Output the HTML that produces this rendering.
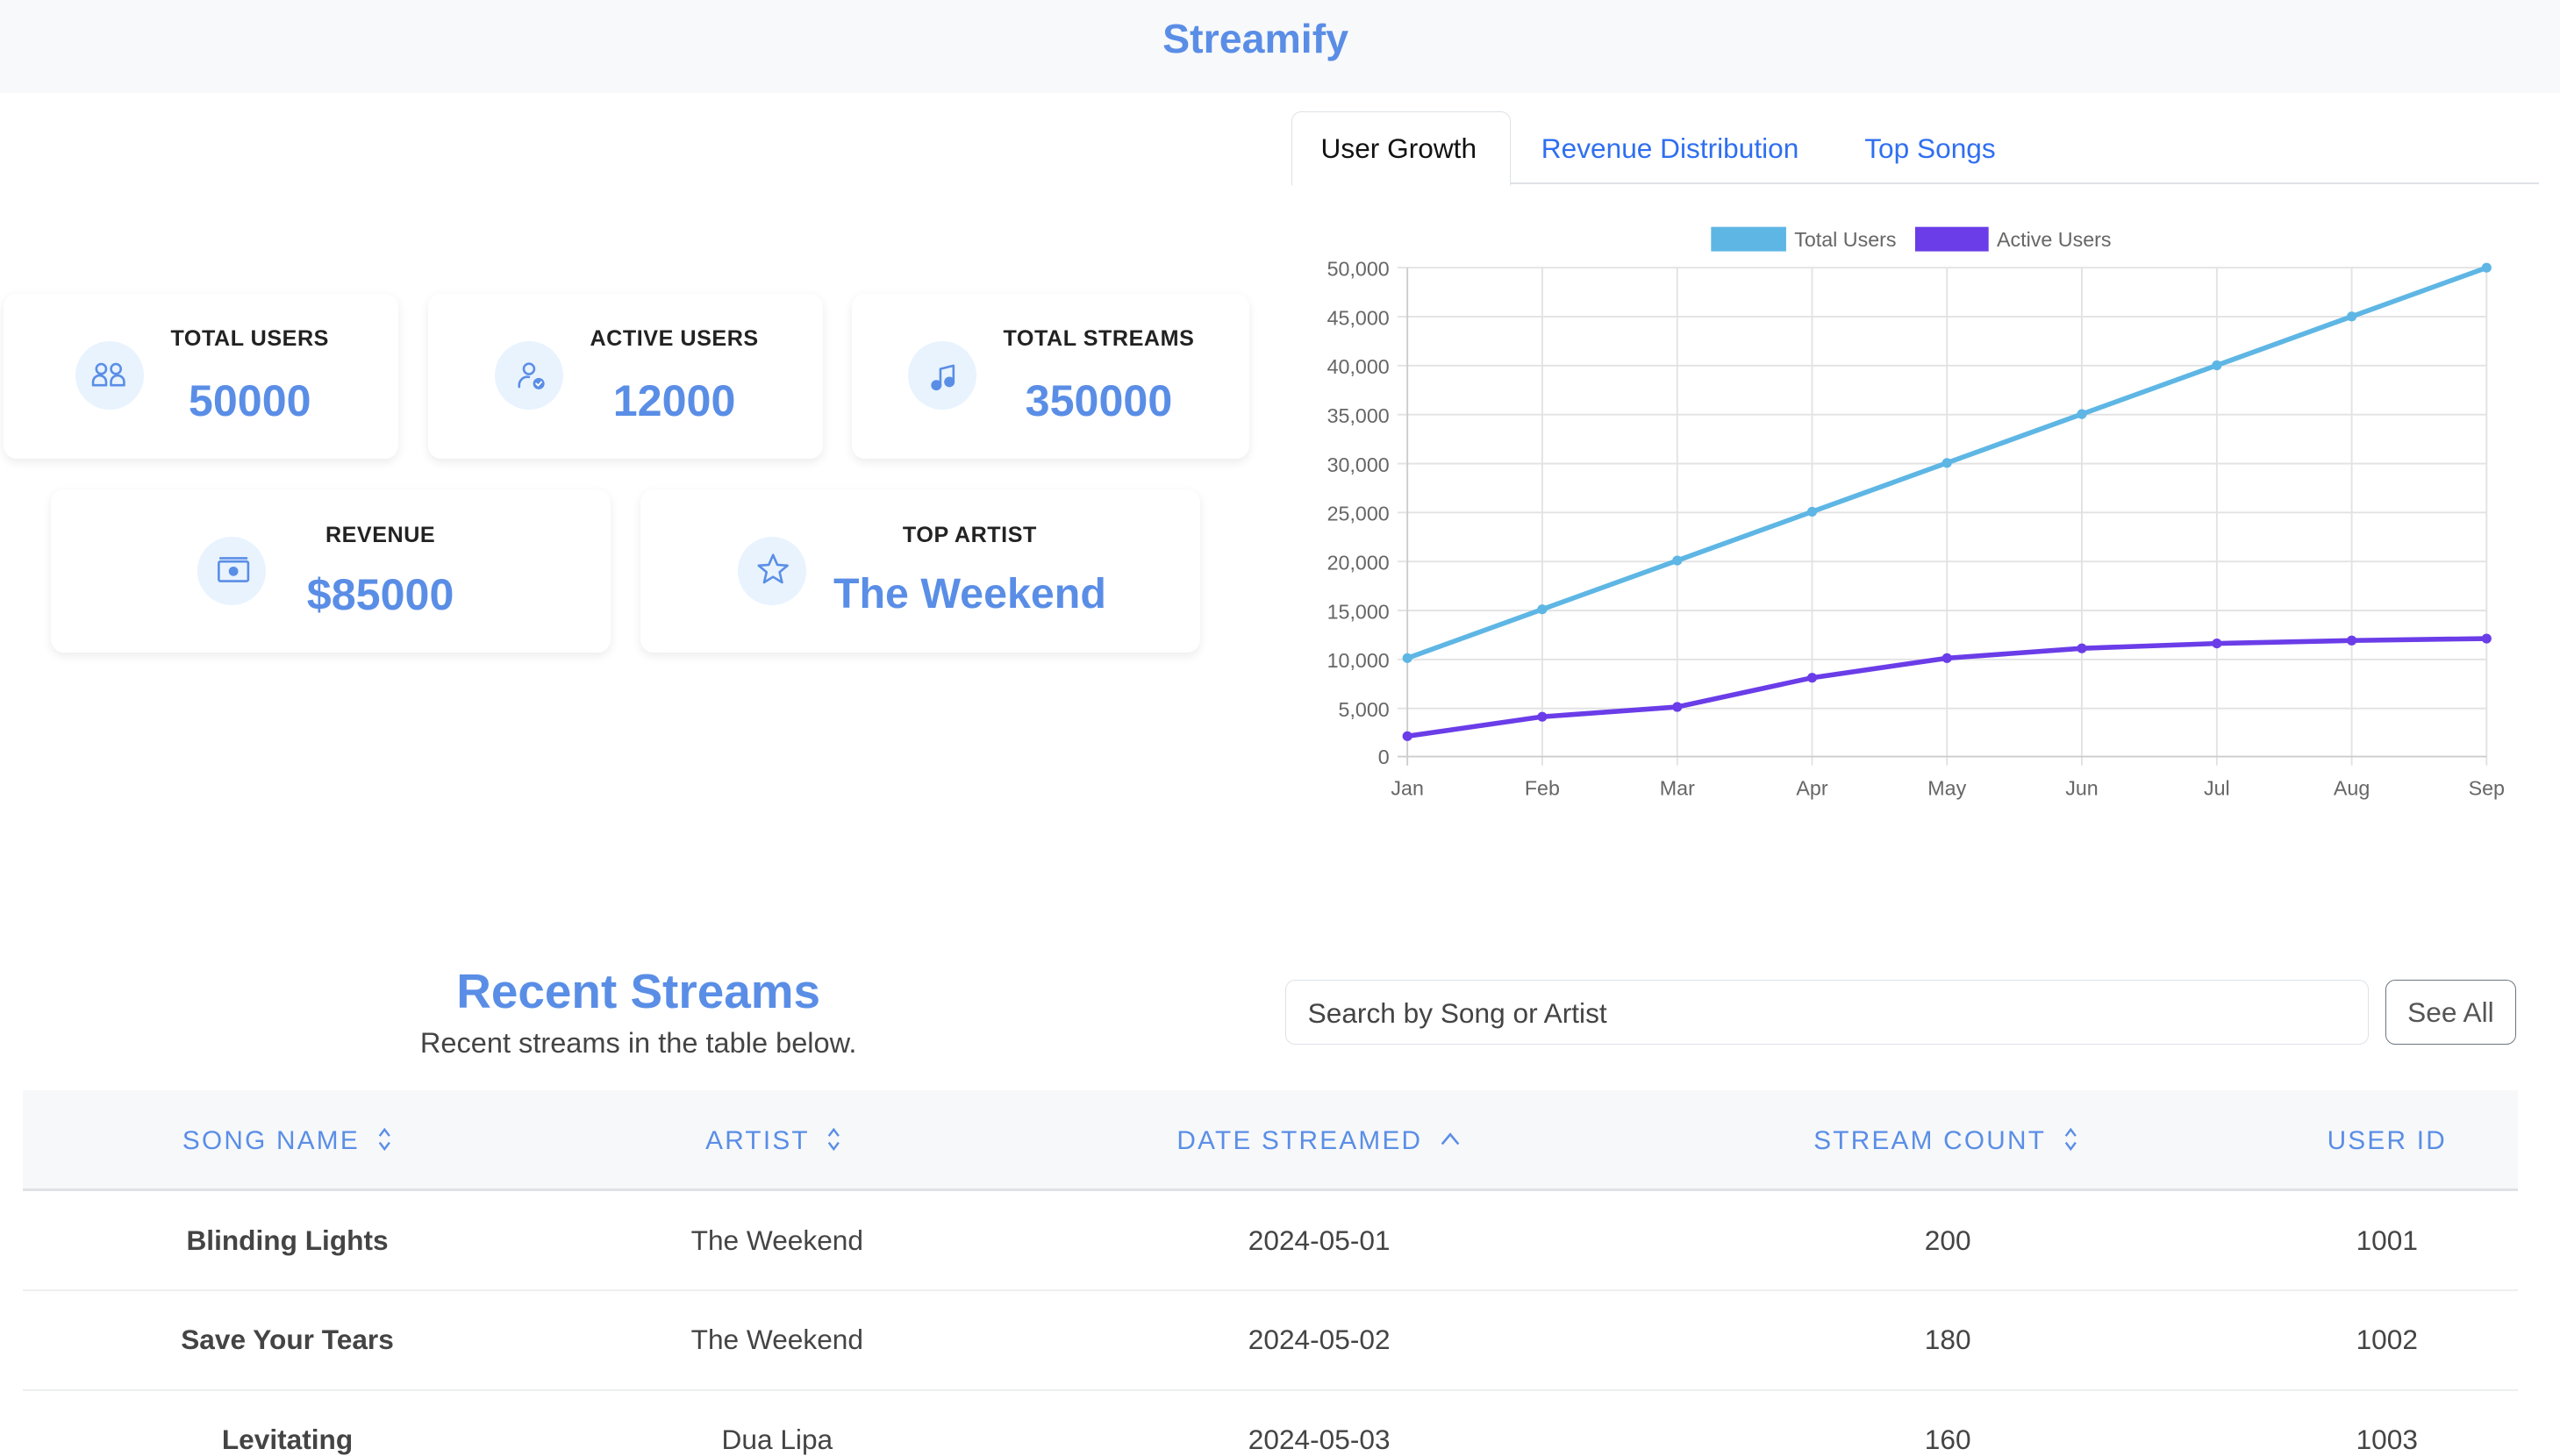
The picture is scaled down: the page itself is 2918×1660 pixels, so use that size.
<!DOCTYPE html>
<html><head><meta charset="utf-8">
<style>
html,body{margin:0;padding:0;background:#fff;overflow:hidden}
#p{position:relative;width:1568px;height:892px;zoom:1.8610;font-family:"Liberation Sans",sans-serif;color:#212529}
.a{position:absolute}
.hdr{left:0;top:0;width:1568px;height:57px;background:#f8f9fa}
.title{left:0;width:1538px;top:9px;text-align:center;font-size:25px;font-weight:bold;color:#5a8ee6}
.card{background:#fff;border-radius:8px;box-shadow:0 2px 6px rgba(0,0,0,.08)}
.ic{width:42px;height:42px;border-radius:50%;background:#e8f3fe}
.lbl{font-size:13.5px;font-weight:bold;color:#222;text-align:center;letter-spacing:.3px}
.val{font-size:27px;font-weight:bold;color:#5a8ee6;text-align:center}
.tab{font-size:17px}
.th{font-size:16px;color:#5a8ee6;letter-spacing:1.2px;text-align:center;line-height:20px}
.th svg{vertical-align:-2px;margin-left:10px}
.td{font-size:17px;color:#444;text-align:center}
</style></head><body>
<div id="p">
<div class="a hdr"></div>
<div class="a title">Streamify</div>

<div class="a card" style="left:2px;top:180px;width:242px;height:101px"></div>
<div class="a card" style="left:262px;top:180px;width:242px;height:101px"></div>
<div class="a card" style="left:522px;top:180px;width:243px;height:101px"></div>
<div class="a card" style="left:31px;top:300px;width:343px;height:100px"></div>
<div class="a card" style="left:392px;top:300px;width:343px;height:100px"></div>

<div class="a ic" style="left:46px;top:209px"></div>
<div class="a ic" style="left:303px;top:209px"></div>
<div class="a ic" style="left:556px;top:209px"></div>
<div class="a ic" style="left:121px;top:329px"></div>
<div class="a ic" style="left:452px;top:329px"></div>

<svg class="a" style="left:0;top:0" width="1568" height="892" fill="none" stroke="#5a8ee6" stroke-width="1.4" stroke-linecap="round" stroke-linejoin="round">
 <circle cx="62" cy="226" r="3"/><circle cx="71" cy="226" r="3"/>
 <path d="M57 236v-2a4 4 0 0 1 8 0v2zM68 236v-2a4 4 0 0 1 8 0v2z"/>
 <circle cx="324" cy="226" r="3.2"/>
 <path d="M318 237v-1a5 5 0 0 1 6-5"/><circle cx="330" cy="235" r="3.5" fill="#5a8ee6" stroke="none"/>
 <path d="M328.4 235l1.2 1.2 2-2.2" stroke="#fff" stroke-width="1"/>
 <path d="M576 236v-10l8-2v10"/><circle cx="573.5" cy="236" r="2.5" fill="#5a8ee6"/><circle cx="581.5" cy="234" r="2.5" fill="#5a8ee6"/>
 <rect x="134" y="344" width="18" height="12" rx="1"/><path d="M135 342h16"/><circle cx="143" cy="350" r="2.2" fill="#5a8ee6"/>
 <path d="M473.5 340l2.6 6 6.2.5-4.8 4 1.5 6.3-5.5-3.4-5.5 3.4 1.5-6.3-4.8-4 6.2-.5z"/>
</svg>

<div class="a lbl" style="left:2px;width:302px;top:200px">TOTAL USERS</div>
<div class="a val" style="left:2px;width:302px;top:230px">50000</div>
<div class="a lbl" style="left:262px;width:302px;top:200px">ACTIVE USERS</div>
<div class="a val" style="left:262px;width:302px;top:230px">12000</div>
<div class="a lbl" style="left:522px;width:302px;top:200px">TOTAL STREAMS</div>
<div class="a val" style="left:522px;width:302px;top:230px">350000</div>
<div class="a lbl" style="left:133px;width:200px;top:320px">REVENUE</div>
<div class="a val" style="left:133px;width:200px;top:349px">$85000</div>
<div class="a lbl" style="left:494px;width:200px;top:320px">TOP ARTIST</div>
<div class="a val" style="left:444px;width:300px;top:349px;font-size:26px">The Weekend</div>

<div class="a" style="left:791px;top:112px;width:764px;height:1px;background:#dee2e6"></div>
<div class="a" style="left:791px;top:68px;width:133px;height:45px;border:1px solid #dee2e6;border-bottom:1px solid #fff;border-radius:6px 6px 0 0;background:#fff"></div>
<div class="a tab" style="left:809px;top:81px;color:#111">User Growth</div>
<div class="a tab" style="left:944px;top:81px;color:#2f6ff0">Revenue Distribution</div>
<div class="a tab" style="left:1142px;top:81px;color:#2f6ff0">Top Songs</div>

<svg class="a" style="left:0;top:0" width="1568" height="892" font-family="Liberation Sans, sans-serif" font-size="12.5" fill="#666">
 <g stroke="#e2e2e2" stroke-width="1">
  <line x1="856" x2="1523" y1="164" y2="164"/><line x1="856" x2="1523" y1="194" y2="194"/>
  <line x1="856" x2="1523" y1="224" y2="224"/><line x1="856" x2="1523" y1="254" y2="254"/>
  <line x1="856" x2="1523" y1="284" y2="284"/><line x1="856" x2="1523" y1="314" y2="314"/>
  <line x1="856" x2="1523" y1="344" y2="344"/><line x1="856" x2="1523" y1="374" y2="374"/>
  <line x1="856" x2="1523" y1="404" y2="404"/><line x1="856" x2="1523" y1="434" y2="434"/>
  <line x1="944.6" x2="944.6" y1="164" y2="469"/><line x1="1027.3" x2="1027.3" y1="164" y2="469"/>
  <line x1="1109.9" x2="1109.9" y1="164" y2="469"/><line x1="1192.5" x2="1192.5" y1="164" y2="469"/>
  <line x1="1275.1" x2="1275.1" y1="164" y2="469"/><line x1="1357.8" x2="1357.8" y1="164" y2="469"/>
  <line x1="1440.4" x2="1440.4" y1="164" y2="469"/><line x1="1523" x2="1523" y1="164" y2="469"/>
 </g>
 <line x1="856" x2="1523" y1="463.5" y2="463.5" stroke="#ccc"/><line x1="862" x2="862" y1="164" y2="469" stroke="#ccc"/>
 <g text-anchor="end">
  <text x="851" y="169">50,000</text><text x="851" y="199">45,000</text><text x="851" y="229">40,000</text>
  <text x="851" y="259">35,000</text><text x="851" y="289">30,000</text><text x="851" y="319">25,000</text>
  <text x="851" y="349">20,000</text><text x="851" y="379">15,000</text><text x="851" y="409">10,000</text>
  <text x="851" y="439">5,000</text><text x="851" y="468">0</text>
 </g>
 <g text-anchor="middle">
  <text x="862" y="487">Jan</text><text x="944.6" y="487">Feb</text><text x="1027.3" y="487">Mar</text>
  <text x="1109.9" y="487">Apr</text><text x="1192.5" y="487">May</text><text x="1275.1" y="487">Jun</text>
  <text x="1357.8" y="487">Jul</text><text x="1440.4" y="487">Aug</text><text x="1523" y="487">Sep</text>
 </g>
 <rect x="1048" y="139" width="46" height="15" fill="#5eb6e4"/><text x="1099" y="151">Total Users</text>
 <rect x="1173" y="139" width="45" height="15" fill="#6a3de8"/><text x="1223" y="151">Active Users</text>
 <polyline fill="none" stroke="#5eb6e4" stroke-width="3" points="862,403.2 944.6,373.3 1027.3,343.4 1109.9,313.5 1192.5,283.6 1275.1,253.7 1357.8,223.8 1440.4,193.9 1523,164"/>
 <polyline fill="none" stroke="#6a3de8" stroke-width="3" points="862,451 944.6,439.1 1027.3,433.1 1109.9,415.2 1192.5,403.2 1275.1,397.2 1357.8,394.2 1440.4,392.4 1523,391.2"/>
 <g fill="#5eb6e4"><circle cx="862" cy="403.2" r="3"/><circle cx="944.6" cy="373.3" r="3"/><circle cx="1027.3" cy="343.4" r="3"/><circle cx="1109.9" cy="313.5" r="3"/><circle cx="1192.5" cy="283.6" r="3"/><circle cx="1275.1" cy="253.7" r="3"/><circle cx="1357.8" cy="223.8" r="3"/><circle cx="1440.4" cy="193.9" r="3"/><circle cx="1523" cy="164" r="3"/></g>
 <g fill="#6a3de8"><circle cx="862" cy="451" r="3"/><circle cx="944.6" cy="439.1" r="3"/><circle cx="1027.3" cy="433.1" r="3"/><circle cx="1109.9" cy="415.2" r="3"/><circle cx="1192.5" cy="403.2" r="3"/><circle cx="1275.1" cy="397.2" r="3"/><circle cx="1357.8" cy="394.2" r="3"/><circle cx="1440.4" cy="392.4" r="3"/><circle cx="1523" cy="391.2" r="3"/></g>
</svg>

<div class="a" style="left:141px;width:500px;top:590px;text-align:center;font-size:29.5px;font-weight:bold;color:#5a8ee6">Recent Streams</div>
<div class="a" style="left:141px;width:500px;top:629px;text-align:center;font-size:17.5px;color:#444">Recent streams in the table below.</div>
<div class="a" style="left:787px;top:600px;width:663px;height:39px;border:1px solid #dee2e6;border-radius:6px"></div>
<div class="a" style="left:801px;top:611px;font-size:17px;color:#444">Search by Song or Artist</div>
<div class="a" style="left:1461px;top:600px;width:79px;height:39px;border:1px solid #6c757d;border-radius:6px;text-align:center;line-height:39px;font-size:17px;color:#555">See All</div>

<div class="a" style="left:14px;top:668px;width:1528px;height:60px;background:#f7f8fa;border-bottom:2px solid #dee2e6"></div>
<div class="a" style="left:14px;top:790px;width:1528px;height:1px;background:#eceef0"></div>
<div class="a" style="left:14px;top:851px;width:1528px;height:1px;background:#eceef0"></div>

<div class="a th" style="left:76px;width:200px;top:689px">SONG NAME<svg width="10" height="16" fill="none" stroke="#5a8ee6" stroke-width="1.3"><path d="M2 6l3-4 3 4M2 10l3 4 3-4"/></svg></div>
<div class="a th" style="left:374px;width:200px;top:689px">ARTIST<svg width="10" height="16" fill="none" stroke="#5a8ee6" stroke-width="1.3"><path d="M2 6l3-4 3 4M2 10l3 4 3-4"/></svg></div>
<div class="a th" style="left:658px;width:300px;top:689px">DATE STREAMED<svg width="14" height="16" fill="none" stroke="#5a8ee6" stroke-width="1.4"><path d="M2 11l5-6 5 6"/></svg></div>
<div class="a th" style="left:1042px;width:300px;top:689px">STREAM COUNT<svg width="10" height="16" fill="none" stroke="#5a8ee6" stroke-width="1.3"><path d="M2 6l3-4 3 4M2 10l3 4 3-4"/></svg></div>
<div class="a th" style="left:1362px;width:200px;top:689px">USER ID</div>

<div class="a td" style="left:76px;width:200px;top:750px;font-weight:bold">Blinding Lights</div>
<div class="a td" style="left:376px;width:200px;top:750px">The Weekend</div>
<div class="a td" style="left:708px;width:200px;top:750px">2024-05-01</div>
<div class="a td" style="left:1093px;width:200px;top:750px">200</div>
<div class="a td" style="left:1362px;width:200px;top:750px">1001</div>

<div class="a td" style="left:76px;width:200px;top:811px;font-weight:bold">Save Your Tears</div>
<div class="a td" style="left:376px;width:200px;top:811px">The Weekend</div>
<div class="a td" style="left:708px;width:200px;top:811px">2024-05-02</div>
<div class="a td" style="left:1093px;width:200px;top:811px">180</div>
<div class="a td" style="left:1362px;width:200px;top:811px">1002</div>

<div class="a td" style="left:76px;width:200px;top:872px;font-weight:bold">Levitating</div>
<div class="a td" style="left:376px;width:200px;top:872px">Dua Lipa</div>
<div class="a td" style="left:708px;width:200px;top:872px">2024-05-03</div>
<div class="a td" style="left:1093px;width:200px;top:872px">160</div>
<div class="a td" style="left:1362px;width:200px;top:872px">1003</div>
</div>
</body></html>
